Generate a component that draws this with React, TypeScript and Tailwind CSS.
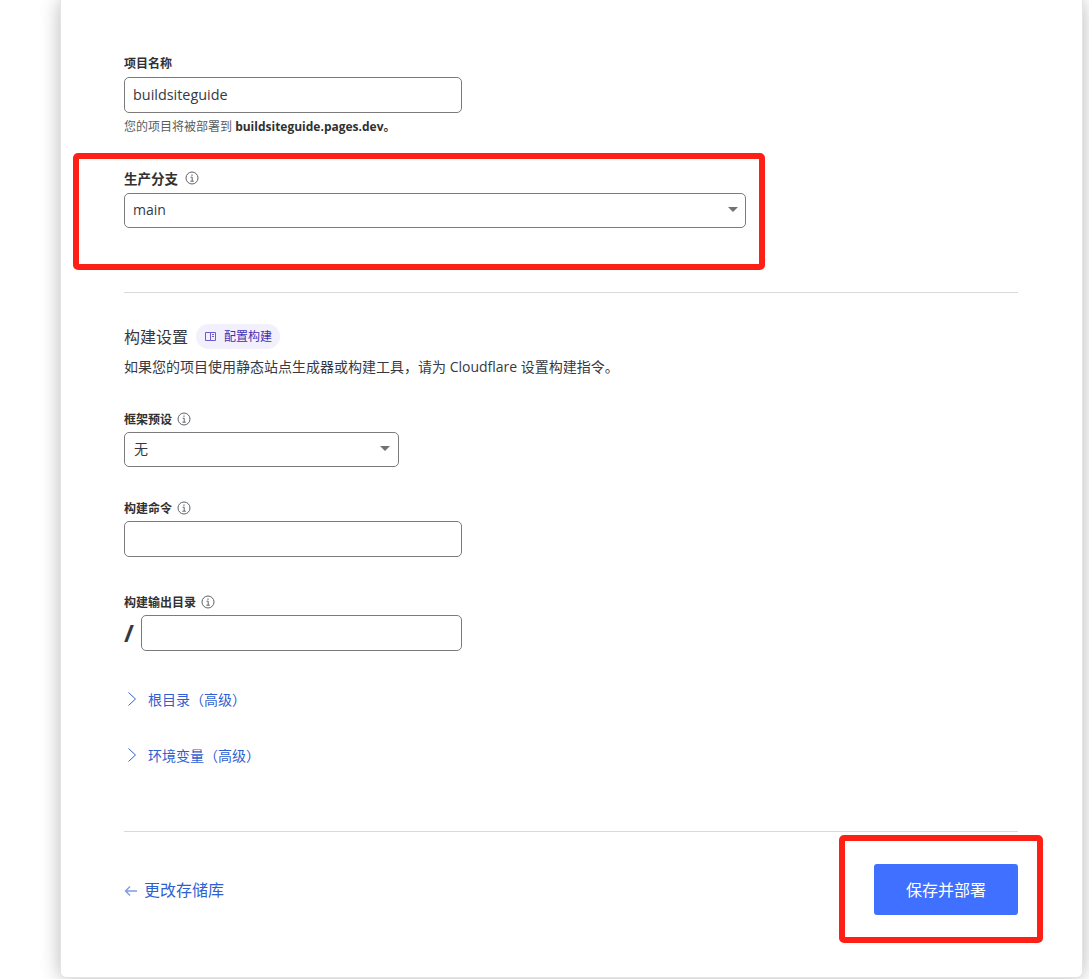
const font = { fontFamily: '"Open Sans", "Noto Sans CJK SC", sans-serif' }

function InfoIcon() {
  return (
    <svg width="14" height="14" viewBox="0 0 14 14" fill="none" stroke="#5f6368" strokeWidth="1" className="shrink-0">
      <circle cx="7" cy="7" r="6" />
      <path d="M5.6 6.2H7.2V10M5.4 10.2H8.8" />
      <path d="M6.4 3.6H7.6V4.8H6.4Z" fill="#5f6368" stroke="none" />
    </svg>
  )
}

function Label({ text, info, big }: { text: string; info?: boolean; big?: boolean }) {
  return (
    <div className={`flex items-center h-[18px] leading-[18px] font-bold text-[#313131] ${big ? "gap-[7px] text-[13.5px]" : "gap-[5px] text-[12px]"}`}>
      <span className="relative top-px">{text}</span>
      {info && <InfoIcon />}
    </div>
  )
}

function Caret() {
  return <span className="w-0 h-0 border-x-[5px] border-x-transparent border-t-[5px] border-t-[#6f7277]" />
}

function Chevron() {
  return (
    <svg width="10" height="16" viewBox="0 0 10 16" fill="none" stroke="#2f5fd0" strokeWidth="1" className="shrink-0">
      <path d="M1.5 1.5L8.5 8L1.5 14.5" />
    </svg>
  )
}

export default function App() {
  return (
    <div style={font} className="relative h-[979px] overflow-hidden bg-white">
      {/* Card with soft shadow on either side */}
      <div className="ml-[60px] mr-[6px] h-[978px] bg-white rounded-b-md border-x border-b border-[#e4e4e4] shadow-[0_0_20px_rgba(0,0,0,0.28)] pl-[63px] pr-[64px] pt-[54px]">
        <Label text="项目名称" />
        <input
          readOnly
          value="buildsiteguide"
          className="block mt-[5px] w-[338px] h-[36px] px-2 pb-[2px] text-[14.4px] text-[#36393f] border border-[#7b7b7b] rounded-[5px] outline-none"
        />
        <p className="mt-[5px] h-[17px] text-[12px] leading-[17px] text-[#5d5d5d]">
          您的项目将被部署到 <b className="text-[#313131]">buildsiteguide.pages.dev。</b>
        </p>

        <div className="mt-[34px]">
          <Label text="生产分支" info big />
        </div>
        <div className="mt-[6px] w-[622px] h-[35px] flex items-center justify-between pl-2 pr-[7px] pb-[2px] text-[14px] text-[#36393f] border border-[#7b7b7b] rounded-[5px]">
          <span>main</span>
          <Caret />
        </div>

        <div className="mt-[64px] h-px bg-[#d9d9d9]" />

        <div className="mt-[31px] flex items-center gap-2 h-[25px]">
          <span className="text-[16px] text-[#36393f]">构建设置</span>
          <span className="flex items-center gap-2 h-[25px] w-[84px] pl-[9px] rounded-full bg-[#f2f0fc] text-[12px] text-[#3f2fb5]">
            <svg width="11" height="11" viewBox="0 0 11 11" fill="none" stroke="#6a5bd2" strokeWidth="1" className="shrink-0">
              <path d="M0.5 1.5H5.5V9.5H0.5ZM5.5 1.5H10.5V9.5H5.5Z" />
              <path d="M7 3.5H9M7 5.5H9" />
            </svg>
            配置构建
          </span>
        </div>
        <p className="mt-[8px] h-[20px] text-[14px] leading-[20px] text-[#36393f]">
          如果您的项目使用静态站点生成器或构建工具，请为 Cloudflare 设置构建指令。
        </p>

        <div className="mt-[33px]">
          <Label text="框架预设" info />
        </div>
        <div className="mt-[4px] w-[275px] h-[35px] flex items-center justify-between pl-[9px] pr-[8px] pb-[3px] text-[14px] text-[#36393f] border border-[#7b7b7b] rounded-[5px]">
          <span>无</span>
          <Caret />
        </div>

        <div className="mt-[32px]">
          <Label text="构建命令" info />
        </div>
        <div className="mt-[4px] w-[338px] h-[36px] border border-[#7b7b7b] rounded-[5px]" />

        <div className="mt-[36px]">
          <Label text="构建输出目录" info />
        </div>
        <div className="mt-[4px] w-[338px] h-[36px] flex items-center gap-[9px]">
          <span className="w-2 text-[24px] leading-[24px] font-bold text-[#36393f]">/</span>
          <div className="flex-1 h-[36px] border border-[#7b7b7b] rounded-[5px]" />
        </div>

        <div className="mt-[40px] flex items-center gap-[11px] pl-[3px] h-[18px] pb-[2px] text-[14px] text-[#2f5fd0]">
          <Chevron />
          根目录（高级）
        </div>
        <div className="mt-[38px] flex items-center gap-[11px] pl-[3px] h-[18px] pb-[2px] text-[14px] text-[#2f5fd0]">
          <Chevron />
          环境变量（高级）
        </div>

        <div className="mt-[66px] h-px bg-[#d9d9d9]" />

        <div className="mt-[32px] flex items-center justify-between">
          <span className="flex items-center gap-[6px] text-[16px] text-[#2f5fd0]">
            <svg width="14" height="12" viewBox="0 0 14 12" fill="none" stroke="#7f9be6" strokeWidth="1.4" className="relative top-px">
              <path d="M13 6H2M6 1.5L1.5 6L6 10.5" />
            </svg>
            更改存储库
          </span>
          <button className="w-[144px] h-[51px] rounded-[3px] bg-[#4070ff] text-[16px] text-white">保存并部署</button>
        </div>
      </div>

      {/* Red annotation boxes drawn over the screenshot */}
      <div className="absolute left-[73px] top-[153px] w-[692px] h-[117px] border-[6px] border-[#ff2015] rounded-[5px] pointer-events-none" />
      <div className="absolute left-[839px] top-[835px] w-[204px] h-[108px] border-[6px] border-[#ff2015] rounded-[5px] pointer-events-none" />
    </div>
  )
}
